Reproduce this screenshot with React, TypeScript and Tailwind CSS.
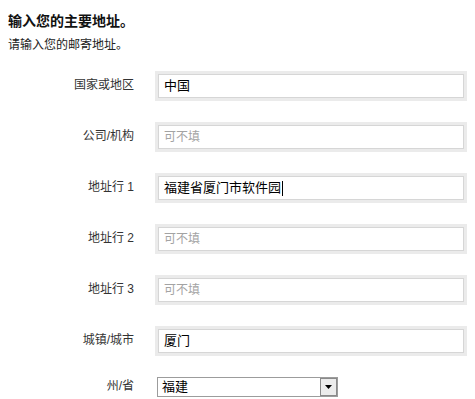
import React from "react";

const font = { fontFamily: '"Liberation Sans", "Noto Sans CJK SC", sans-serif' };

function Field({ value, placeholder, cursor }: { value?: string; placeholder?: string; cursor?: boolean }) {
  return (
    <div className="ml-[21px] h-[30px] w-[312px] bg-[#ebebeb] p-[3px]">
      <div className="flex h-[24px] w-full items-center border border-[#d6d6d6] bg-white pl-[5px]">
        {value ? (
          <span className="flex items-center text-[13px] leading-[16px] text-black">
            {value}
            {cursor && <span className="ml-[1px] inline-block h-[15px] w-[1px] bg-black" />}
          </span>
        ) : (
          <span className="text-[12px] leading-[16px] text-[#a3a3a3]">{placeholder}</span>
        )}
      </div>
    </div>
  );
}

function Row({ label, children }: { label: React.ReactNode; children: React.ReactNode }) {
  return (
    <div className="flex items-center">
      <div className="w-[134px] pb-[2px] text-right text-[12px] leading-[16px] text-[#333]">{label}</div>
      {children}
    </div>
  );
}

export default function App() {
  return (
    <div className="h-[399px] w-[475px] bg-white" style={font}>
      <div className="pl-[8px] pt-[11px]">
        <div className="text-[14px] font-bold leading-[20px] text-[#111]">输入您的主要地址。</div>
        <div className="mt-[6px] text-[12px] leading-[16px] text-[#222]">请输入您的邮寄地址。</div>
      </div>
      <div className="mt-[18px] flex flex-col gap-[21px]">
        <Row label="国家或地区">
          <Field value="中国" />
        </Row>
        <Row label="公司/机构">
          <Field placeholder="可不填" />
        </Row>
        <Row label="地址行 1">
          <Field value="福建省厦门市软件园" cursor />
        </Row>
        <Row label="地址行 2">
          <Field placeholder="可不填" />
        </Row>
        <Row label="地址行 3">
          <Field placeholder="可不填" />
        </Row>
        <Row label="城镇/城市">
          <Field value="厦门" />
        </Row>
        <Row label="州/省">
          <div className="ml-[23px] flex h-[20px] w-[181px] items-center border border-[#9c9c9c] bg-white">
            <span className="flex-1 pl-[4px] text-[13px] leading-[16px] text-black">福建</span>
            <div className="flex h-[18px] w-[17px] items-center justify-center border border-[#8a8a8a] bg-[#ececec]">
              <svg width="7" height="4" viewBox="0 0 7 4">
                <path d="M0 0H7L3.5 4Z" fill="#000" />
              </svg>
            </div>
          </div>
        </Row>
      </div>
    </div>
  );
}
